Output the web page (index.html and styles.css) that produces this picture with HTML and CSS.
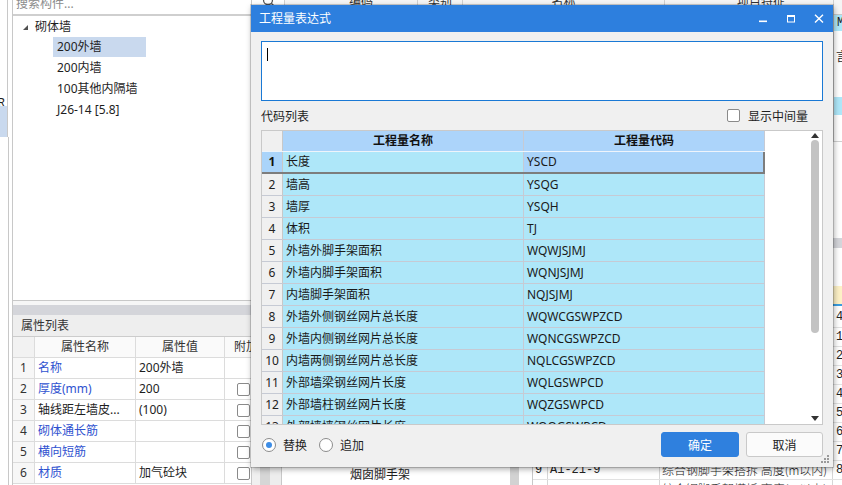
FILE: index.html
```html
<!DOCTYPE html>
<html lang="zh-CN">
<head>
<meta charset="utf-8">
<title>工程量表达式</title>
<link rel="stylesheet" href="styles.css">
</head>
<body>
<div class="app">
  <div class="edge">
    <div class="edge-gap"></div>
    <div class="edge-r">R</div>
    <div class="edge-sel"></div>
  </div>
  <div class="side">
    <div class="tree-box">
      <div class="search">搜索构件...</div>
      <div class="tree">
        <div class="node root"><span class="tri"></span><span>砌体墙</span></div>
        <div class="node leaf selected">200外墙</div>
        <div class="node leaf">200内墙</div>
        <div class="node leaf">100其他内隔墙</div>
        <div class="node leaf">J26-14 [5.8]</div>
      </div>
    </div>
    <div class="prop-gap"></div>
    <div class="prop-bar"></div>
    <div class="prop-title">属性列表</div>
    <div class="props">
      <div class="prow phead"><div class="pn"></div><div class="pk">属性名称</div><div class="pv">属性值</div><div class="pa">附加</div></div>
      <div class="prow"><div class="pn">1</div><div class="pk link">名称</div><div class="pv">200外墙</div><div class="pa"></div></div>
      <div class="prow"><div class="pn">2</div><div class="pk link">厚度(mm)</div><div class="pv">200</div><div class="pa"><span class="cb"></span></div></div>
      <div class="prow"><div class="pn">3</div><div class="pk">轴线距左墙皮...</div><div class="pv">(100)</div><div class="pa"><span class="cb"></span></div></div>
      <div class="prow"><div class="pn">4</div><div class="pk link">砌体通长筋</div><div class="pv"></div><div class="pa"><span class="cb"></span></div></div>
      <div class="prow"><div class="pn">5</div><div class="pk link">横向短筋</div><div class="pv"></div><div class="pa"><span class="cb"></span></div></div>
      <div class="prow"><div class="pn">6</div><div class="pk link">材质</div><div class="pv">加气砼块</div><div class="pa"><span class="cb"></span></div></div>
    </div>
  </div>
  <div class="main">
    <div class="upper">
      <div class="urow uhead"><div class="u0"><svg class="mag" width="14" height="14" viewBox="0 0 14 14"><circle cx="7" cy="6" r="4.5" fill="none" stroke="#555" stroke-width="1.3"/><path d="M10.3 9.3L13 12" stroke="#555" stroke-width="1.4"/></svg></div><div class="u1">编码</div><div class="u2">类别</div><div class="u3">名称</div><div class="u4">项目特征</div><div class="u5"></div></div>
      <div class="urow ur1"><div class="u0"></div><div class="u1"></div><div class="u2"></div><div class="u3"></div><div class="u4"></div><div class="u5 mono">M</div></div>
      <div class="urow ur2"><div class="u0"></div><div class="u1"></div><div class="u2"></div><div class="u3"></div><div class="u4"></div><div class="u5">言</div></div>
      <div class="urow ur3"><div class="u0"></div><div class="u1"></div><div class="u2"></div><div class="u3"></div><div class="u4"></div><div class="u5"></div></div>
      <div class="urow ur4"><div class="u0"></div><div class="u1"></div><div class="u2"></div><div class="u3"></div><div class="u4"></div><div class="u5"></div></div>
      <div class="urow ur5"><div class="u0"></div><div class="u1"></div><div class="u2"></div><div class="u3"></div><div class="u4"></div><div class="u5"></div></div>
    </div>
    <div class="split"></div>
    <div class="lower">
      <div class="lower-left">
        <div class="ll-a"></div>
        <div class="ll-b"></div>
        <div class="ll-c"></div>
        <div class="ll-list"><div class="ll-item">烟囱脚手架</div></div>
        <div class="ll-scroll"></div>
        <div class="ll-d"></div>
      </div>
      <div class="lower-right">
        <div class="lr-space"></div>
        <div class="lr-head"></div>
        <div class="lr-row first"><div class="l0"></div><div class="l1"></div><div class="l2"></div><div class="l3">4</div></div>
        <div class="lr-row"><div class="l0"></div><div class="l1"></div><div class="l2"></div><div class="l3">1</div></div>
        <div class="lr-row"><div class="l0"></div><div class="l1"></div><div class="l2"></div><div class="l3">2</div></div>
        <div class="lr-row"><div class="l0"></div><div class="l1"></div><div class="l2"></div><div class="l3">3</div></div>
        <div class="lr-row"><div class="l0"></div><div class="l1"></div><div class="l2"></div><div class="l3">4</div></div>
        <div class="lr-row"><div class="l0"></div><div class="l1"></div><div class="l2"></div><div class="l3">5</div></div>
        <div class="lr-row"><div class="l0"></div><div class="l1"></div><div class="l2"></div><div class="l3">6</div></div>
        <div class="lr-row"><div class="l0"></div><div class="l1"></div><div class="l2"></div><div class="l3">7</div></div>
        <div class="lr-row"><div class="l0">9</div><div class="l1">A1-21-9</div><div class="l2">综合钢脚手架搭拆 高度(m以内)</div><div class="l3">8</div></div>
        <div class="lr-row"><div class="l0"></div><div class="l1"></div><div class="l2">综合钢脚手架搭拆 高度(m以上)</div><div class="l3"></div></div>
      </div>
    </div>
  </div>
</div>

<div class="dialog">
  <div class="titlebar">
    <span class="title">工程量表达式</span>
    <div class="winbtns">
      <span class="wb"><svg width="10" height="10" viewBox="0 0 10 10"><rect x="1" y="6.5" width="8" height="1.6" fill="#fff"/></svg></span>
      <span class="wb"><svg width="10" height="10" viewBox="0 0 10 10"><rect x="1.5" y="1.5" width="7" height="6.5" fill="none" stroke="#fff" stroke-width="1"/><rect x="1" y="1" width="8" height="2" fill="#fff"/></svg></span>
      <span class="wb"><svg width="10" height="10" viewBox="0 0 10 10"><path d="M1 0.8L9 8.6M9 0.8L1 8.6" stroke="#fff" stroke-width="1.4" fill="none"/></svg></span>
    </div>
  </div>
  <div class="dbody">
    <div class="expr"><span class="caret"></span></div>
    <div class="listbar">
      <span>代码列表</span>
      <span class="chk"><span class="box"></span><span>显示中间量</span></span>
    </div>
    <div class="grid">
      <div class="grid-main">
        <div class="grow head"><div class="rn"></div><div class="c1">工程量名称</div><div class="c2">工程量代码</div></div>
        <div class="grow cur"><div class="rn">1</div><div class="c1">长度</div><div class="c2">YSCD</div></div>
        <div class="grow"><div class="rn">2</div><div class="c1">墙高</div><div class="c2">YSQG</div></div>
        <div class="grow"><div class="rn">3</div><div class="c1">墙厚</div><div class="c2">YSQH</div></div>
        <div class="grow"><div class="rn">4</div><div class="c1">体积</div><div class="c2">TJ</div></div>
        <div class="grow"><div class="rn">5</div><div class="c1">外墙外脚手架面积</div><div class="c2">WQWJSJMJ</div></div>
        <div class="grow"><div class="rn">6</div><div class="c1">外墙内脚手架面积</div><div class="c2">WQNJSJMJ</div></div>
        <div class="grow"><div class="rn">7</div><div class="c1">内墙脚手架面积</div><div class="c2">NQJSJMJ</div></div>
        <div class="grow"><div class="rn">8</div><div class="c1">外墙外侧钢丝网片总长度</div><div class="c2">WQWCGSWPZCD</div></div>
        <div class="grow"><div class="rn">9</div><div class="c1">外墙内侧钢丝网片总长度</div><div class="c2">WQNCGSWPZCD</div></div>
        <div class="grow"><div class="rn">10</div><div class="c1">内墙两侧钢丝网片总长度</div><div class="c2">NQLCGSWPZCD</div></div>
        <div class="grow"><div class="rn">11</div><div class="c1">外部墙梁钢丝网片长度</div><div class="c2">WQLGSWPCD</div></div>
        <div class="grow"><div class="rn">12</div><div class="c1">外部墙柱钢丝网片长度</div><div class="c2">WQZGSWPCD</div></div>
        <div class="grow"><div class="rn">13</div><div class="c1">外部墙墙钢丝网片长度</div><div class="c2">WQQGSWPCD</div></div>
      </div>
      <div class="scroll-area">
        <div class="vscroll">
          <span class="arr up"></span>
          <span class="thumb"></span>
          <span class="vfill"></span>
          <span class="arr down"></span>
        </div>
      </div>
    </div>
    <div class="footer">
      <span class="radio on"></span><span class="rlabel">替换</span>
      <span class="radio"></span><span class="rlabel">追加</span>
      <span class="btns">
        <span class="btn primary">确定</span>
        <span class="btn">取消</span>
      </span>
    </div>
  </div>
  <svg class="grip" width="9" height="9" viewBox="0 0 9 9">
    <rect x="7" y="1" width="2" height="2" fill="#9a9a9a"/>
    <rect x="4" y="4" width="2" height="2" fill="#9a9a9a"/>
    <rect x="7" y="4" width="2" height="2" fill="#9a9a9a"/>
    <rect x="1" y="7" width="2" height="2" fill="#9a9a9a"/>
    <rect x="4" y="7" width="2" height="2" fill="#9a9a9a"/>
    <rect x="7" y="7" width="2" height="2" fill="#9a9a9a"/>
  </svg>
</div>
</body>
</html>
```

FILE: styles.css
```css
* { box-sizing: border-box; }
html, body { margin: 0; padding: 0; }
body {
  width: 842px;
  height: 485px;
  overflow: hidden;
  position: relative;
  background: #ffffff;
  font-family: "Noto Sans", "Noto Sans CJK SC", sans-serif;
  font-size: 12px;
  color: #1e1e1e;
}

.app { display: flex; width: 842px; height: 485px; }

/* far-left strip */
.edge {
  width: 12px;
  flex: none;
  display: flex;
  flex-direction: column;
  background: #fff;
}
.edge-gap { height: 95px; width: 8px; border-right: 1px solid #c8c8c8; }
.edge-r {
  width: 8px; height: 11px; line-height: 16px;
  border-right: 1px solid #c8c8c8;
  text-align: right; padding-right: 2px;
  overflow: visible; white-space: nowrap; direction: rtl;
}
.edge-sel { width: 8px; height: 31px; background: #c9d9ee; border-right: 1px solid #c8c8c8; }
.edge::after { content: ""; flex: 1; width: 8px; border-right: 1px solid #c8c8c8; }

/* left panel */
.side {
  width: 240px;
  flex: none;
  display: flex;
  flex-direction: column;
  border-left: 1px solid #c8c8c8;
  border-right: 1px solid #c8c8c8;
  overflow: hidden;
}
.tree-box { height: 301px; border-bottom: 1px solid #c8c8c8; flex: none; }
.search {
  height: 16px;
  line-height: 8px;
  padding-left: 3px;
  color: #8c8c8c;
  border-bottom: 2px solid #cfcfcf;
  white-space: nowrap;
}
.tree { display: flex; flex-direction: column; }
.node { height: 21px; line-height: 20px; white-space: nowrap; color: #1e1e1e; }
.root { display: flex; align-items: center; padding-left: 10px; }
.tri {
  width: 0; height: 0;
  border-left: 5px solid transparent;
  border-bottom: 5px solid #505050;
  margin-right: 7px;
  margin-top: 1px;
}
.leaf { margin-left: 40px; width: 93px; padding-left: 4px; height: 20px; margin-bottom: 1px; }
.leaf.selected { background: #c9d9ee; }

.prop-gap { height: 4px; background: #f6f6f6; flex: none; }
.prop-bar { height: 10px; background: #d4d5da; flex: none; }
.prop-title {
  height: 22px; line-height: 21px;
  padding-left: 8px;
  background: #eeeeee;
  border-bottom: 1px solid #cccccc;
  color: #333;
  flex: none;
}
.props { display: flex; flex-direction: column; width: 300px; }
.prow { display: flex; height: 21px; border-bottom: 1px solid #dcdcdc; line-height: 20px; }
.prow > div { border-right: 1px solid #dcdcdc; white-space: nowrap; overflow: hidden; }
.pn { width: 22px; text-align: center; background: #f7f7f7; color: #333; }
.pk { width: 101px; padding-left: 3px; }
.pv { width: 89px; padding-left: 3px; }
.pa { width: 60px; padding-left: 12px; display: flex; align-items: center; }
.phead > div { text-align: center; padding-left: 0; background: #fafafa; color: #333; }
.phead .pn { background: #f2f2f2; }
.phead .pa { display: block; padding-left: 9px; text-align: left; }
.link { color: #2f52d0; }
.cb { width: 13px; height: 13px; border: 1px solid #8a8a8a; border-radius: 2px; background: #fff; display: block; }

/* main background */
.main { flex: 1; display: flex; flex-direction: column; overflow: hidden; }
.upper { height: 238px; flex: none; display: flex; flex-direction: column; }
.urow { display: flex; flex: none; }
.urow > div { border-right: 1px solid #d0d0d0; white-space: nowrap; overflow: hidden; }
.u0 { width: 33px; } .u1 { width: 133px; } .u2 { width: 45px; } .u3 { width: 202px; } .u4 { width: 169px; } .u5 { flex: 1; border-right: 0 !important; }
.uhead { margin-top: -9px; height: 24px; line-height: 22px; background: #f5f5f5; border-bottom: 1px solid #c8c8c8; color: #333; }
.uhead > div { text-align: center; }
.uhead .u0 { background: #fff; text-align: left; padding-left: 9px; display: flex; align-items: flex-start; padding-top: 3px; }
.mag { display: block; }
.uhead .u1 { padding-left: 20px; }
.uhead .u4 { padding-left: 24px; }
.ur1 { height: 16px; line-height: 16px; }
.ur1 .u5 { background: #aee7f9; padding-left: 3px; }
.ur2 { height: 52px; line-height: 52px; }
.ur2 .u5 { padding-left: 2px; }
.ur3 { height: 14px; }
.ur4 { height: 18px; }
.ur4 .u5 { background: #aee7f9; }
.ur5 { height: 27px; border-bottom: 1px solid #d0d0d0; }
.mono { font-family: "Liberation Mono", monospace; }
.split { height: 10px; background: #d4d5da; flex: none; }

.lower { flex: 1; display: flex; }
.lower-left { width: 281px; flex: none; display: flex; }
.ll-a { width: 8px; background: #f0f0f0; }
.ll-b { width: 10px; background: #d6d6d6; }
.ll-c { width: 12px; background: #ededed; border-right: 1px solid #c8c8c8; }
.ll-list { width: 228px; background: #fff; padding-top: 218px; }
.ll-item { padding-left: 68px; height: 18px; line-height: 18px; white-space: nowrap; color: #1e1e1e; }
.ll-scroll { width: 9px; background: #d2d2d2; }
.ll-d { flex: 1; border-right: 1px solid #c8c8c8; }

.lower-right { flex: 1; display: flex; flex-direction: column; }
.lr-space { height: 38px; flex: none; }
.lr-head { height: 20px; background: #fdf1c6; border-bottom: 2px solid #3a9de0; flex: none; }
.lr-row {
  display: flex; height: 19px; line-height: 18px; flex: none;
  border-bottom: 1px solid #e2e2e2;
  font-family: "Liberation Mono", "Noto Sans CJK SC", monospace;
  color: #222;
}
.lr-row.first { height: 22px; line-height: 22px; }
.lr-row > div { border-right: 1px solid #d6d6d6; white-space: nowrap; overflow: hidden; }
.l0 { width: 15px; padding-left: 2px; }
.l1 { width: 112px; padding-left: 2px; }
.l2 { width: 173px; padding-left: 2px; font-family: "Noto Sans CJK SC", sans-serif; font-weight: 300; }
.l3 { flex: 1; padding-left: 3px; border-right: 0 !important; }

/* dialog */
.dialog {
  position: absolute;
  left: 251px;
  top: 5px;
  width: 582px;
  height: 462px;
  background: #f0f0f0;
  box-shadow: 0 0 0 1px rgba(0,0,0,0.16), 1px 2px 6px rgba(0,0,0,0.35);
  display: flex;
  flex-direction: column;
}
.titlebar {
  height: 27px;
  background: #2d7fde;
  display: flex;
  align-items: center;
  padding-left: 8px;
  flex: none;
}
.title { color: #fff; line-height: 27px; }
.winbtns { margin-left: auto; display: flex; height: 27px; }
.wb { width: 28px; height: 27px; display: flex; align-items: center; justify-content: center; }
.wb svg { display: block; }

.dbody { padding: 9px 10px 0 10px; display: flex; flex-direction: column; flex: 1; }
.expr {
  height: 60px;
  border: 1px solid #1a79d5;
  background: #fff;
  flex: none;
  display: flex;
  align-items: flex-start;
}
.caret { width: 1px; height: 13px; background: #000; margin-left: 5px; margin-top: 6px; }
.listbar {
  height: 29px;
  display: flex;
  align-items: center;
  justify-content: space-between;
  padding-right: 15px;
  flex: none;
  color: #1e1e1e;
}
.chk { display: flex; align-items: center; }
.chk .box { width: 13px; height: 13px; border: 1px solid #8a8a8a; border-radius: 2px; background: #fff; margin-right: 8px; }

.grid {
  height: 295px;
  border: 1px solid #c9c9c9;
  background: #fff;
  display: flex;
  flex: none;
  overflow: hidden;
}
.grid-main { width: 503px; flex: none; display: flex; flex-direction: column; }
.grow { display: flex; height: 22px; flex: none; border-bottom: 1px solid #c6cad4; line-height: 21px; }
.grow > div { white-space: nowrap; overflow: hidden; }
.rn { width: 21px; border-right: 1px solid #c8c8c8; background: #f0f0f0; text-align: center; color: #222; }
.c1 { width: 241px; border-right: 1px solid #c6cad4; background: #aee7f9; padding-left: 3px; color: #1a1a1a; }
.c2 { width: 241px; border-right: 1px solid #c6cad4; background: #aee7f9; padding-left: 3px; color: #1a1a1a; }
.grow.head { height: 21px; line-height: 20px; border-bottom: 1px solid #eef4fb; }
.head .c1, .head .c2 { background: #acd4fa; text-align: center; font-weight: bold; color: #111; padding-left: 0; }
.head .rn { background: #f0f0f0; }
.grow.cur { border-bottom: 2px solid #7d7d7d; line-height: 20px; }
.cur .rn { background: #aad4fa; font-weight: bold; color: #111; }
.cur .c2 { background: #aad4fa; border-right: 2px solid #7d7d7d; }

.scroll-area { flex: 1; display: flex; justify-content: flex-end; }
.vscroll { width: 8px; margin-right: 3px; display: flex; flex-direction: column; align-items: center; }
.arr { width: 0; height: 0; border-left: 4px solid transparent; border-right: 4px solid transparent; flex: none; }
.arr.up { border-bottom: 5px solid #333; margin-top: 2px; }
.arr.down { border-top: 5px solid #333; margin-bottom: 3px; }
.thumb { width: 8px; height: 193px; background: #c3c3c3; border-radius: 4px; margin-top: 2px; flex: none; }
.vfill { flex: 1; }

.footer { display: flex; align-items: center; height: 25px; margin-top: 7px; flex: none; }
.radio {
  width: 14px; height: 14px; border-radius: 50%;
  border: 1px solid #8c8c8c; background: #fff;
  margin-left: 1px;
  display: flex; align-items: center; justify-content: center;
}
.radio.on::after { content: ""; width: 6px; height: 6px; border-radius: 50%; background: #3d8de6; }
.rlabel { margin-left: 7px; margin-right: 11px; color: #1e1e1e; }
.btns { margin-left: auto; display: flex; gap: 7px; }
.btn {
  width: 77px; height: 25px; border-radius: 3px;
  display: flex; align-items: center; justify-content: center;
  background: #fbfbfb; border: 1px solid #c9c9c9; color: #222;
}
.btn.primary { width: 78px; background: #2f80de; border-color: #2f80de; color: #fff; }
.grip { position: absolute; right: 4px; bottom: 4px; }
```
